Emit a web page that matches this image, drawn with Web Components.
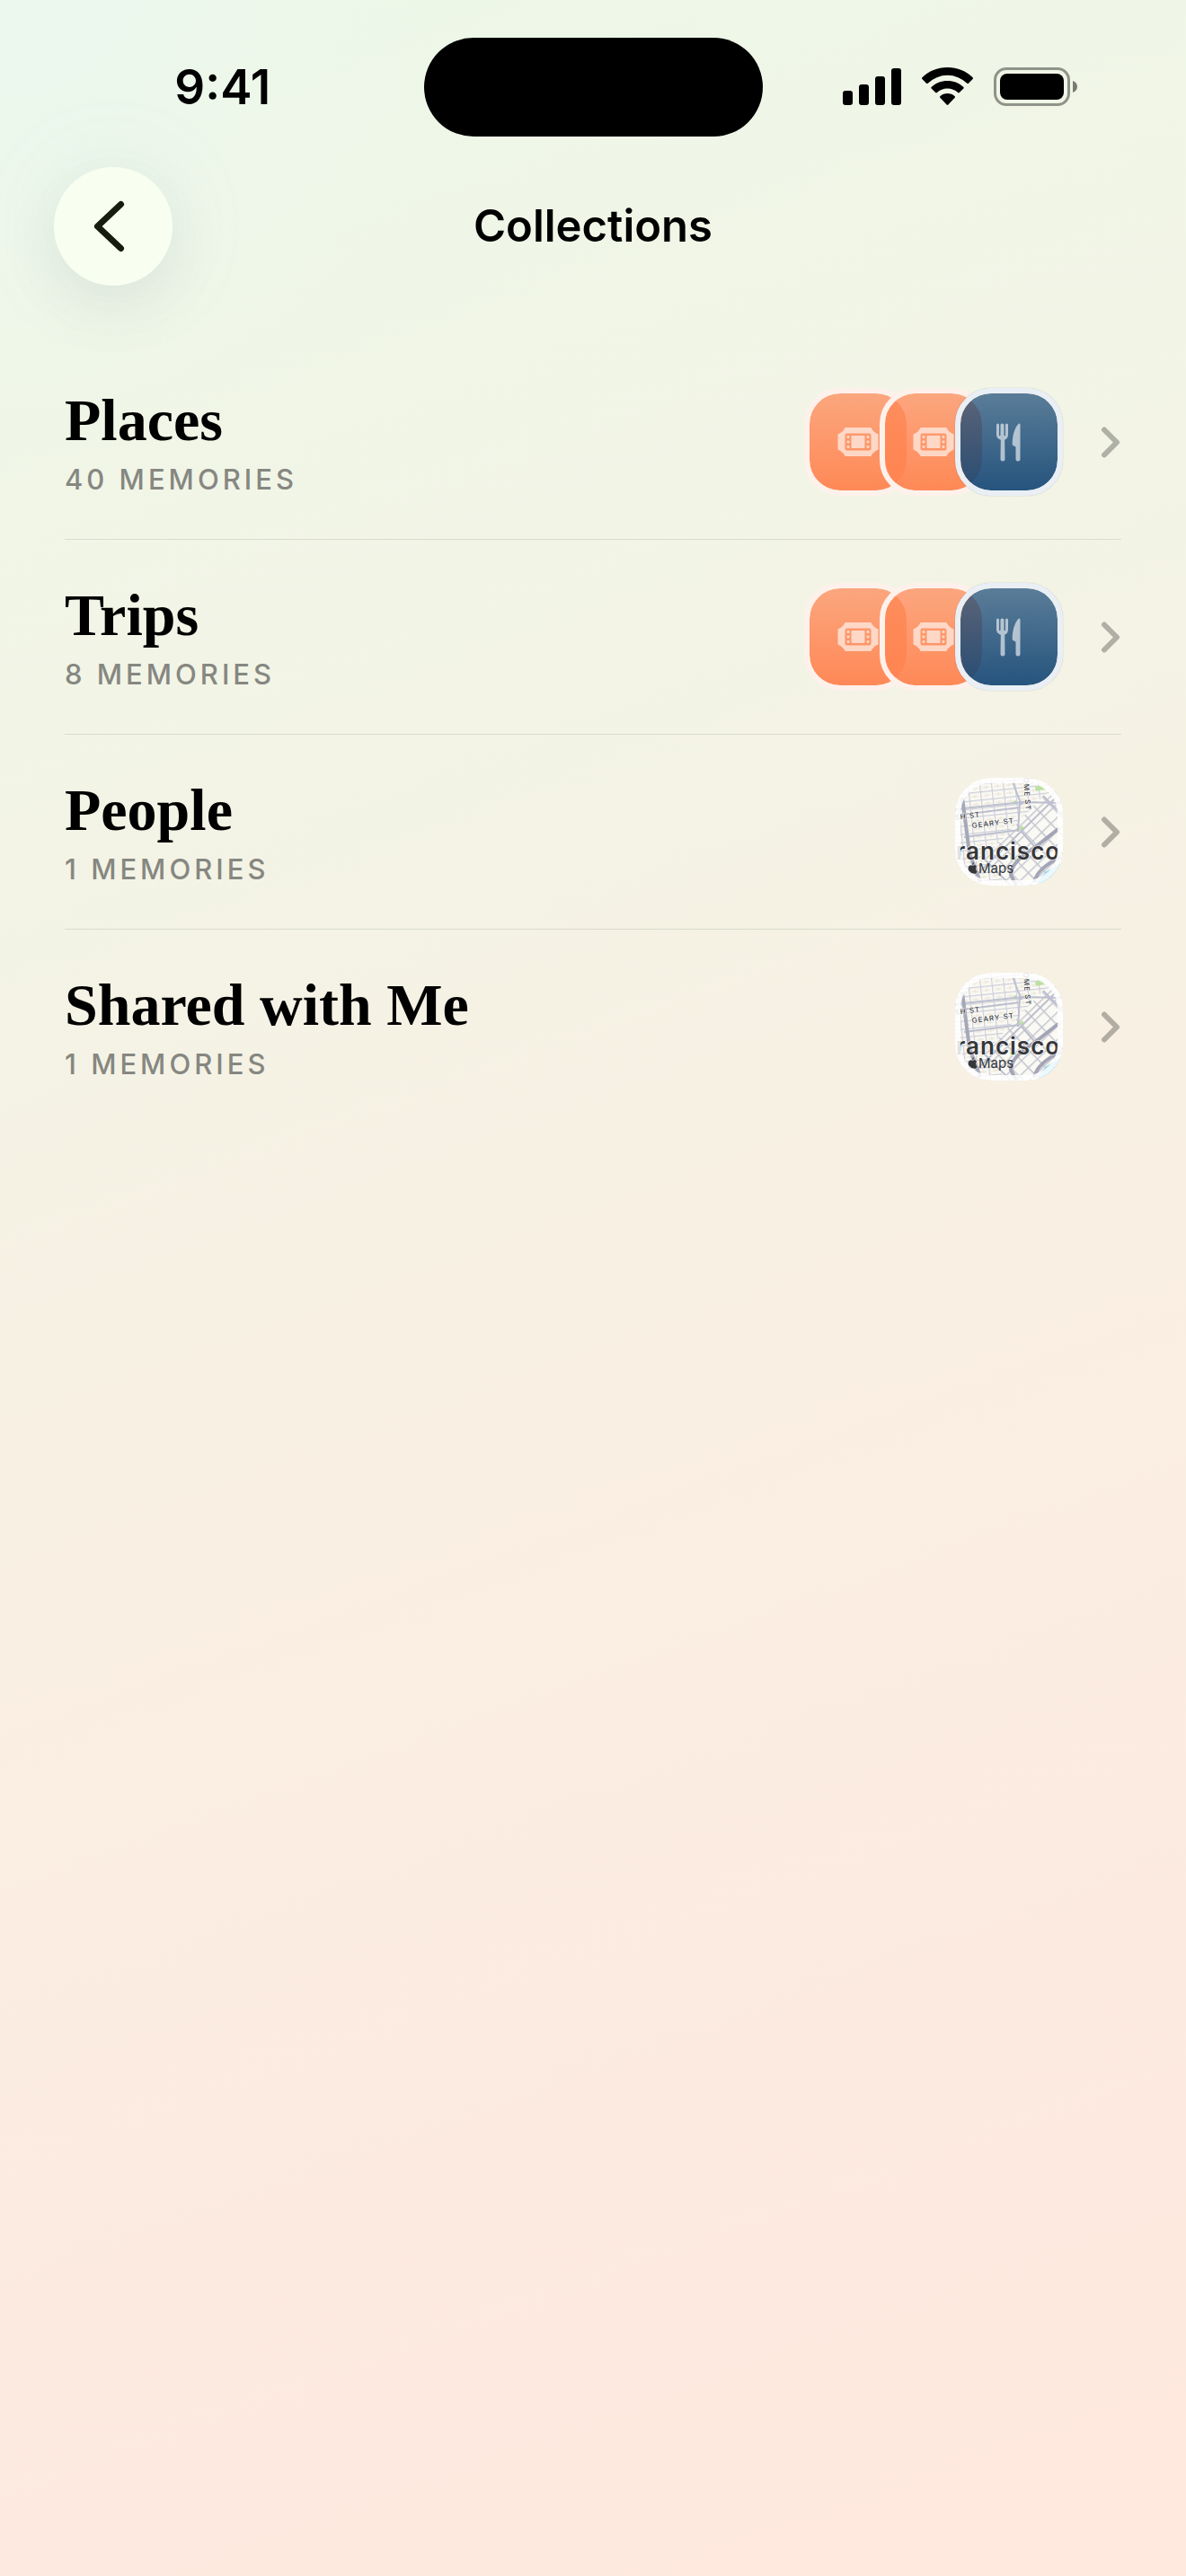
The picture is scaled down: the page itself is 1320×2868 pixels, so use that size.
<!DOCTYPE html>
<html lang="en">
<head>
<meta charset="utf-8">
<meta name="viewport" content="width=device-width, initial-scale=1">
<title>Collections</title>
<style>
  html {
    min-height: 100%;
    background: radial-gradient(520px 480px at 0 0, rgba(236, 248, 240, 0.7), rgba(236, 248, 236, 0) 100%),
      linear-gradient(160deg, #ebf8e8 0%, #f0f6e7 14%, #f4f3e5 35%, #faeee2 58%, #fceae0 79%, #ffe8de 98%);
  }

  body {
    margin: 0;
    color: #000;
    font-family: Inter, "Liberation Sans", sans-serif;
  }
</style>
</head>
<body>

<collections-page>
  <status-bar slot="status">9:41</status-bar>
  <nav-bar slot="nav">Collections</nav-bar>

  <collection-row>
    Places
    <span slot="count">40 Memories</span>
    <tile-stack slot="preview">
      <icon-tile kind="ticket"></icon-tile>
      <icon-tile kind="ticket"></icon-tile>
      <icon-tile kind="food"></icon-tile>
    </tile-stack>
  </collection-row>

  <collection-row>
    Trips
    <span slot="count">8 Memories</span>
    <tile-stack slot="preview">
      <icon-tile kind="ticket"></icon-tile>
      <icon-tile kind="ticket"></icon-tile>
      <icon-tile kind="food"></icon-tile>
    </tile-stack>
  </collection-row>

  <collection-row>
    People
    <span slot="count">1 Memories</span>
    <tile-stack slot="preview">
      <map-tile></map-tile>
    </tile-stack>
  </collection-row>

  <collection-row>
    Shared with Me
    <span slot="count">1 Memories</span>
    <tile-stack slot="preview">
      <map-tile></map-tile>
    </tile-stack>
  </collection-row>
</collections-page>

<script>
const collectionsPageTemplate = document.createElement('template');

collectionsPageTemplate.innerHTML = `
<style>
  :host {
    display: block;
  }

  main {
    padding: 66px 72px 0;
  }
</style>
<slot name="status"></slot>
<slot name="nav"></slot>
<main><slot></slot></main>
`;

class CollectionsPage extends HTMLElement {
  constructor() {
    super();

    this.attachShadow({mode: 'open'});
    this.shadowRoot.appendChild(collectionsPageTemplate.content.cloneNode(true));
  }
}

customElements.define('collections-page', CollectionsPage);


const statusBarTemplate = document.createElement('template');

statusBarTemplate.innerHTML = `
<style>
  :host {
    display: grid;
    grid-template-columns: 1fr 377px 1fr;
    align-items: center;
    padding: 42px 0 34px;
  }

  .time {
    padding-left: 24px;
    text-align: center;
    font-size: 53px;
    font-weight: 600;
    line-height: 60px;
  }

  .island {
    height: 110px;
    border-radius: 55px;
    background: #000;
  }

  .icons {
    display: flex;
    justify-content: center;
    gap: 23px;
    padding-right: 32px;
  }
</style>
<div class="time"><slot></slot></div>
<div class="island"></div>
<div class="icons">
  <svg width="65" height="44" viewBox="0 0 65 44" aria-hidden="true">
    <rect x="0" y="26" width="11" height="16" rx="3"/>
    <rect x="18" y="19" width="11" height="23" rx="3"/>
    <rect x="36" y="10" width="11" height="32" rx="3"/>
    <rect x="54" y="1" width="11" height="41" rx="3"/>
  </svg>
  <svg width="57" height="44" viewBox="0 0 57 44" aria-hidden="true">
    <path d="M28.500 0C39.500 0 49.500 4.200 56.600 11.200Q57.400 12 56.600 12.900L52 17.700Q51.200 18.500 50.300 17.700A31.300 31.300 0 0 0 6.700 17.700Q5.800 18.500 5 17.700L.4 12.900Q-.4 12 .4 11.200C7.500 4.200 17.500 0 28.500 0Z"/>
    <path d="M28.500 15C35.400 15 41.700 17.600 46.400 22Q47.200 22.800 46.400 23.600L41.800 28.100Q41 28.900 40.100 28.100A17 17 0 0 0 16.900 28.100Q16 28.900 15.200 28.100L10.600 23.600Q9.800 22.800 10.600 22C15.300 17.600 21.600 15 28.500 15Z"/>
    <path d="M28.500 29C31.600 29 34.500 30.200 36.700 32.200Q37.500 33 36.700 33.800L29.400 41.500Q28.500 42.400 27.600 41.500L20.300 33.800Q19.500 33 20.300 32.200C22.500 30.200 25.400 29 28.500 29Z"/>
  </svg>
  <svg width="93" height="44" viewBox="0 0 93 44" aria-hidden="true">
    <rect x="1.500" y="1.500" width="82" height="40" rx="12.500" fill="none" stroke="#000" stroke-opacity=".4" stroke-width="3"/>
    <rect x="7" y="7" width="71" height="29" rx="8"/>
    <path d="M88 15C91 16 93 18.500 93 21.500S91 27 88 28Z" fill-opacity=".5"/>
  </svg>
</div>
`;

class StatusBar extends HTMLElement {
  constructor() {
    super();

    this.attachShadow({mode: 'open'});
    this.shadowRoot.appendChild(statusBarTemplate.content.cloneNode(true));
  }
}

customElements.define('status-bar', StatusBar);


const navBarTemplate = document.createElement('template');

navBarTemplate.innerHTML = `
<style>
  :host {
    display: grid;
    grid-template-columns: 132px 1fr 132px;
    align-items: center;
    padding: 0 60px;
  }

  button {
    display: grid;
    place-items: center;
    width: 132px;
    height: 132px;
    padding: 0;
    border: 0;
    border-radius: 50%;
    background: #f8fff0;
    color: #161c0e;
    box-shadow: 0 24px 64px rgba(70, 60, 80, 0.08), 0 0 100px rgba(160, 200, 220, 0.1);
  }

  h1 {
    margin: 0;
    text-align: center;
    font-size: 49px;
    font-weight: 600;
    line-height: 60px;
  }
</style>
<button type="button" aria-label="Back">
  <svg width="44" height="60" viewBox="0 0 44 60" fill="none" stroke="currentColor" stroke-width="7" stroke-linecap="round" stroke-linejoin="round" aria-hidden="true">
    <path d="M30.500 5.500L4.500 30L30.500 54.500"/>
  </svg>
</button>
<h1><slot></slot></h1>
`;

class NavBar extends HTMLElement {
  constructor() {
    super();

    this.attachShadow({mode: 'open'});
    this.shadowRoot.appendChild(navBarTemplate.content.cloneNode(true));
  }
}

customElements.define('nav-bar', NavBar);


const collectionRowTemplate = document.createElement('template');

collectionRowTemplate.innerHTML = `
<style>
  :host {
    display: block;
    border-bottom: 1px solid #d8dbce;
  }

  :host(:last-of-type) {
    border-bottom: 0;
  }

  a {
    display: flex;
    align-items: center;
    gap: 41px;
    padding: 48px 0;
    color: inherit;
    text-decoration: none;
  }

  .text {
    display: grid;
    flex: 1;
    gap: 12px;
  }

  h2 {
    margin: 0;
    font-family: "Liberation Serif", serif;
    font-size: 66px;
    font-weight: 700;
    line-height: 72px;
  }

  p {
    margin: 0;
    color: #868781;
    font-size: 31px;
    font-weight: 500;
    letter-spacing: 4px;
    line-height: 36px;
    text-transform: uppercase;
  }
</style>
<a href="#">
  <div class="text">
    <h2><slot></slot></h2>
    <p><slot name="count"></slot></p>
  </div>
  <slot name="preview"></slot>
  <svg width="24" height="36" viewBox="0 0 24 36" fill="none" stroke="#000" stroke-opacity=".28" stroke-width="6" stroke-linecap="round" stroke-linejoin="round" aria-hidden="true">
    <path d="M5 4.500L19 18.500L5 32.500"/>
  </svg>
</a>
`;

class CollectionRow extends HTMLElement {
  constructor() {
    super();

    this.attachShadow({mode: 'open'});
    this.shadowRoot.appendChild(collectionRowTemplate.content.cloneNode(true));
  }
}

customElements.define('collection-row', CollectionRow);


const tileStackTemplate = document.createElement('template');

tileStackTemplate.innerHTML = `
<style>
  :host {
    display: flex;
  }

  ::slotted(:not(:first-child)) {
    margin-left: -36px;
  }
</style>
<slot></slot>
`;

class TileStack extends HTMLElement {
  constructor() {
    super();

    this.attachShadow({mode: 'open'});
    this.shadowRoot.appendChild(tileStackTemplate.content.cloneNode(true));
  }
}

customElements.define('tile-stack', TileStack);


const tileIcons = {
  ticket: `
    <svg width="46" height="32" viewBox="0 0 46 32" aria-hidden="true">
      <path fill="#fff" fill-opacity=".62" fill-rule="evenodd" d="M8.500 0H37.500Q39 4.500 45.500 7.500V24.500Q39 27.500 37.500 32H8.500Q7 27.500 .5 24.500V7.500Q7 4.500 8.500 0ZM10.500 6.500Q8.500 6.500 8.500 8.500V23.500Q8.500 25.500 10.500 25.500H35.500Q37.500 25.500 37.500 23.500V8.500Q37.500 6.500 35.500 6.500Z"/>
      <g fill="#fff" fill-opacity=".62">
        <rect x="15.500" y="9" width="15" height="14" rx="1"/>
        <rect x="10.500" y="9" width="3" height="3" rx="1"/>
        <rect x="10.500" y="14.500" width="3" height="3" rx="1"/>
        <rect x="10.500" y="20" width="3" height="3" rx="1"/>
        <rect x="32.500" y="9" width="3" height="3" rx="1"/>
        <rect x="32.500" y="14.500" width="3" height="3" rx="1"/>
        <rect x="32.500" y="20" width="3" height="3" rx="1"/>
      </g>
    </svg>`,
  food: `
    <svg width="28" height="43" viewBox="0 0 28 43" aria-hidden="true">
      <path fill="#fff" fill-opacity=".6" d="M1.500 .5Q3 .5 3 2V13.500Q3 14.300 3.700 14.300T4.500 13.500V2Q4.500 .5 6.500 .5T8.500 2V13.500Q8.500 14.300 9.200 14.300T10 13.500V2Q10 .5 11.500 .5T13 2V13Q13 17 9.200 18.700L9.500 40Q9.500 42.500 7 42.500T4.500 40L4.800 18.700Q0 17 0 13V2Q0 .5 1.500 .5Z"/>
      <path fill="#fff" fill-opacity=".6" d="M25 .5Q26.500 0 26.500 2V40Q26.500 42.500 24 42.500T21.500 40V26.500L18.500 25Q17.500 24.500 17.700 22C18 13 20.500 4.500 25 .5Z"/>
    </svg>`,
};

const iconTileTemplate = document.createElement('template');

iconTileTemplate.innerHTML = `
<style>
  :host {
    display: grid;
    place-items: center;
    box-sizing: border-box;
    width: 120px;
    height: 120px;
    border: 6px solid #fef1eb;
    border-radius: 40px;
    background: linear-gradient(rgba(255, 133, 82, 0.7), rgba(255, 133, 82, 0.97)) padding-box;
  }

  :host([kind="food"]) {
    border-color: #e9eff4;
    background: linear-gradient(rgba(25, 74, 119, 0.7), rgba(25, 74, 119, 0.94)) padding-box;
    box-shadow: 0 0 1px rgba(25, 74, 119, 0.5);
  }
</style>
`;

class IconTile extends HTMLElement {
  constructor() {
    super();

    this.attachShadow({mode: 'open'});
    this.shadowRoot.appendChild(iconTileTemplate.content.cloneNode(true));
  }

  static get observedAttributes() {
    return ['kind'];
  }

  attributeChangedCallback(name, oldVal, newVal) {
    const icon = document.createElement('template');
    icon.innerHTML = tileIcons[newVal];
    this.shadowRoot.appendChild(icon.content);
  }
}

customElements.define('icon-tile', IconTile);


const mapTileTemplate = document.createElement('template');

mapTileTemplate.innerHTML = `
<style>
  :host {
    display: block;
    width: 120px;
    height: 120px;
    overflow: hidden;
    border-radius: 40px;
  }

  svg {
    display: block;
  }

  text {
    font-family: Inter, "Liberation Sans", sans-serif;
    fill: #35373a;
  }
</style>
<svg width="120" height="120" viewBox="0 0 120 120" role="img" aria-label="Map of San Francisco">
  <defs>
    <pattern id="blocks" width="13" height="9" patternUnits="userSpaceOnUse" patternTransform="rotate(-6)">
      <path d="M0 .5H13M.5 0V9" stroke="#cdced9" stroke-width="1.400"/>
      <path d="M3 5H11M7 3V7" stroke="#e8e2d4" stroke-width="1"/>
    </pattern>
    <pattern id="lots" width="11" height="14" patternUnits="userSpaceOnUse" patternTransform="rotate(46)">
      <path d="M0 .5H11M.5 0V14" stroke="#c3c5d0" stroke-width="1.800"/>
    </pattern>
  </defs>
  <rect width="120" height="120" fill="#faf9f3"/>
  <rect width="120" height="120" fill="url(#blocks)"/>
  <path d="M120 10L98 20L32 90L58 120H120Z" fill="#faf9f3"/>
  <path d="M120 10L98 20L32 90L58 120H120Z" fill="url(#lots)"/>
  <path d="M89 10L97 8L99 13L90 15ZM71 56L75 53L77 57L73 59ZM61 88L66 86L67 91L62 93ZM65 26L68 25L68 28L65 29Z" fill="#b9e2a0"/>
  <path d="M90 120Q104 102 120 92V120Z" fill="#e9edf0"/>
  <path d="M92 116Q100 102 120 94V103L100 120Z" fill="#7fd0e8"/>
  <g fill="none" stroke="#bcbfcf" stroke-width="2">
    <path d="M0 35L75 27L120 28M0 42L72 33M10 66L72 58M72 28L70 60M64 4Q68 16 74 30M74 60L88 76"/>
    <path d="M22 110L112 22M32 90L62 120M98 20L120 42"/>
  </g>
  <path d="M8 22Q12 54 16 84L28 116" fill="none" stroke="#a5a8b9" stroke-width="4"/>
  <path d="M116 56L88 78Q62 94 62 108L68 120M118 88Q92 100 88 116" fill="none" stroke="#a3a5b6" stroke-width="4"/>
  <g font-size="8" font-weight="500" stroke="#fff" stroke-width="1" paint-order="stroke">
    <text transform="translate(0 47) rotate(-7)" letter-spacing="1">SH ST</text>
    <text transform="translate(19 56) rotate(-7)" letter-spacing="1">GEARY ST</text>
    <text transform="translate(76 0) rotate(86)" letter-spacing="1">OME ST</text>
  </g>
  <text x="1" y="91" font-size="26" font-weight="600" letter-spacing="1" stroke="#fff" stroke-width="1" paint-order="stroke">rancisco</text>
  <text x="26" y="106" font-size="15">Maps</text>
  <path d="M21 94Q21 96.500 19 97Q19 94.500 21 94ZM24.500 104.500Q22.500 108 21 106.500Q19.500 106 18.500 106.500Q16.500 107.500 15 104Q13.500 99 16.500 97.500Q18 97 19.500 98Q22 96.500 24 98.500Q21.500 101.500 24.500 104.500Z" fill="#35373a"/>
  <rect x="3" y="3" width="114" height="114" rx="37" fill="none" stroke="#fff" stroke-opacity=".85" stroke-width="6"/>
</svg>
`;

class MapTile extends HTMLElement {
  constructor() {
    super();

    this.attachShadow({mode: 'open'});
    this.shadowRoot.appendChild(mapTileTemplate.content.cloneNode(true));
  }
}

customElements.define('map-tile', MapTile);
</script>
</body>
</html>
